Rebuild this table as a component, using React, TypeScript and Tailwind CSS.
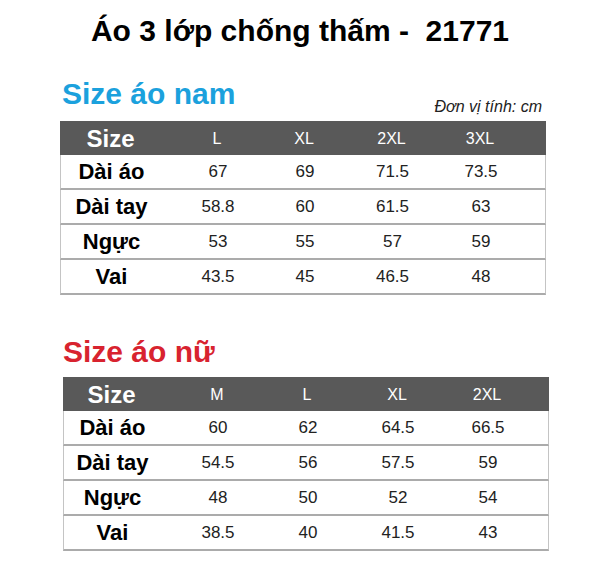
import React from 'react';

type Table = {
  sizes: string[];
  rows: { label: string; values: string[] }[];
};

const men: Table = {
  sizes: ['L', 'XL', '2XL', '3XL'],
  rows: [
    { label: 'Dài áo', values: ['67', '69', '71.5', '73.5'] },
    { label: 'Dài tay', values: ['58.8', '60', '61.5', '63'] },
    { label: 'Ngực', values: ['53', '55', '57', '59'] },
    { label: 'Vai', values: ['43.5', '45', '46.5', '48'] },
  ],
};

const women: Table = {
  sizes: ['M', 'L', 'XL', '2XL'],
  rows: [
    { label: 'Dài áo', values: ['60', '62', '64.5', '66.5'] },
    { label: 'Dài tay', values: ['54.5', '56', '57.5', '59'] },
    { label: 'Ngực', values: ['48', '50', '52', '54'] },
    { label: 'Vai', values: ['38.5', '40', '41.5', '43'] },
  ],
};

const SizeTable = ({ data, cols }: { data: Table; cols: string }) => (
  <div className="w-[486px]">
    <div className={`grid ${cols} h-[34px] items-center bg-[#595959] text-white`}>
      <div className="flex justify-center pr-3 text-[24px] font-bold">Size</div>
      {data.sizes.map((s) => (
        <div key={s} className="text-center text-[16px]">
          {s}
        </div>
      ))}
      <div />
    </div>
    {data.rows.map((row) => (
      <div
        key={row.label}
        className={`grid ${cols} h-[35px] items-center border-x border-b-2 border-x-[#c4c4c4] border-b-[#ababab] text-black`}
      >
        <div className="flex justify-center pr-3 text-[22px] font-bold">{row.label}</div>
        {row.values.map((v, i) => (
          <div key={i} className="text-center text-[17px] text-[#222]">
            {v}
          </div>
        ))}
        <div />
      </div>
    ))}
  </div>
);

export default function App() {
  return (
    <div className="w-[600px] h-[585px] bg-white font-['Liberation_Sans',Arial,sans-serif]">
      <h1 className="pt-[16px] text-center text-[30px] leading-[30px] font-bold text-black">
        Áo 3 lớp chống thấm -&nbsp; 21771
      </h1>

      <section className="ml-[60px] mt-[33px]">
        <div className="flex h-[42px] w-[486px] justify-between">
          <h2 className="ml-[2px] text-[30px] leading-[30px] font-bold text-[#1ba1dd]">Size áo nam</h2>
          <span className="mt-[20px] mr-[4px] text-[16px] leading-[16px] italic text-[#222]">Đơn vị tính: cm</span>
        </div>
        <SizeTable data={men} cols="grid-cols-[113px_88px_86px_89px_88px_1fr]" />
      </section>

      <section className="ml-[63px] mt-[42px]">
        <h2 className="h-[40px] text-[30px] leading-[30px] font-bold text-[#d8232f]">Size áo nữ</h2>
        <SizeTable data={women} cols="grid-cols-[109px_90px_90px_90px_90px_1fr]" />
      </section>
    </div>
  );
}
